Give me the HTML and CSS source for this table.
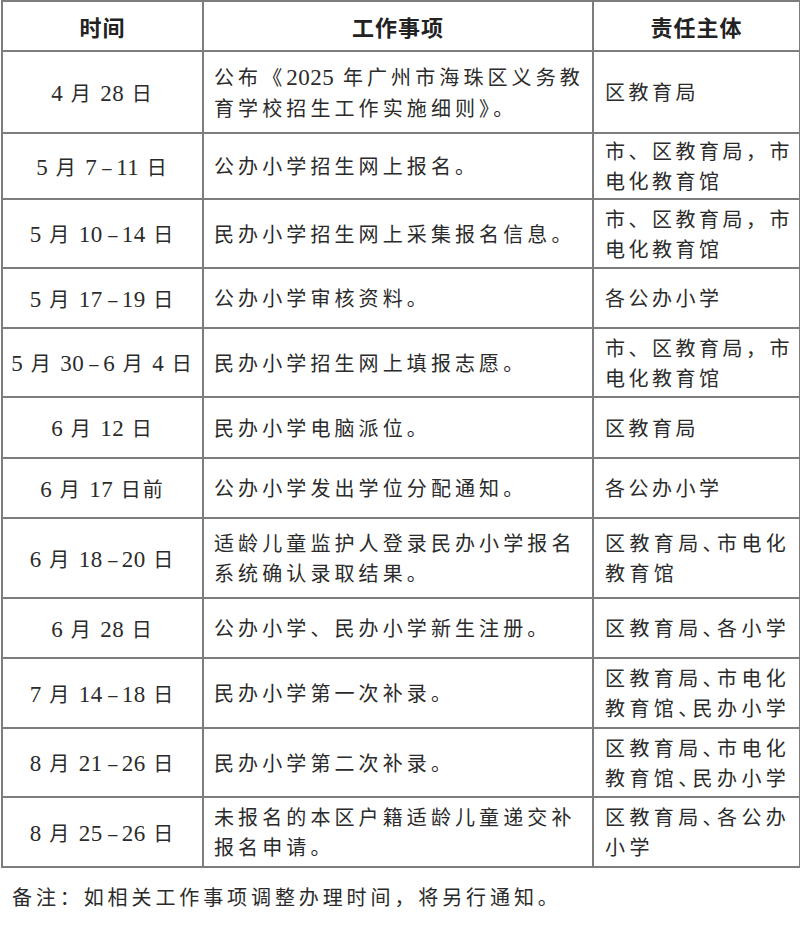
FILE: index.html
```html
<!DOCTYPE html>
<html lang="zh-CN">
<head>
<meta charset="utf-8">
<title>招生工作安排</title>
<link rel="stylesheet" href="styles.css">
</head>
<body>
<table class="sched">
  <colgroup>
    <col class="c1"><col class="c2"><col class="c3">
  </colgroup>
  <thead>
    <tr class="h50">
      <th>时间</th><th>工作事项</th><th>责任主体</th>
    </tr>
  </thead>
  <tbody>
    <tr class="h82">
      <td class="date"><span class="n">4</span> 月 <span class="n">28</span> 日</td>
      <td class="task">公布《<span class="n">2025</span> 年广州市海珠区义务教<br>育学校招生工作实施细则》。</td>
      <td class="who">区教育局</td>
    </tr>
    <tr class="h66">
      <td class="date"><span class="n">5</span> 月 <span class="n">7<span class="d">–</span>11</span> 日</td>
      <td class="task">公办小学招生网上报名。</td>
      <td class="who">市、区教育局，市<br>电化教育馆</td>
    </tr>
    <tr class="h69">
      <td class="date"><span class="n">5</span> 月 <span class="n">10<span class="d">–</span>14</span> 日</td>
      <td class="task">民办小学招生网上采集报名信息。</td>
      <td class="who">市、区教育局，市<br>电化教育馆</td>
    </tr>
    <tr class="h60">
      <td class="date"><span class="n">5</span> 月 <span class="n">17<span class="d">–</span>19</span> 日</td>
      <td class="task">公办小学审核资料。</td>
      <td class="who">各公办小学</td>
    </tr>
    <tr class="h69">
      <td class="date"><span class="n">5</span> 月 <span class="n">30<span class="d">–</span>6</span> 月 <span class="n">4</span> 日</td>
      <td class="task">民办小学招生网上填报志愿。</td>
      <td class="who">市、区教育局，市<br>电化教育馆</td>
    </tr>
    <tr class="h61">
      <td class="date"><span class="n">6</span> 月 <span class="n">12</span> 日</td>
      <td class="task">民办小学电脑派位。</td>
      <td class="who">区教育局</td>
    </tr>
    <tr class="h60">
      <td class="date"><span class="n">6</span> 月 <span class="n">17</span> 日前</td>
      <td class="task">公办小学发出学位分配通知。</td>
      <td class="who">各公办小学</td>
    </tr>
    <tr class="h80">
      <td class="date"><span class="n">6</span> 月 <span class="n">18<span class="d">–</span>20</span> 日</td>
      <td class="task">适龄儿童监护人登录民办小学报名<br>系统确认录取结果。</td>
      <td class="who tight">区教育局<span class="half">、</span>市电化<br>教育馆</td>
    </tr>
    <tr class="h60">
      <td class="date"><span class="n">6</span> 月 <span class="n">28</span> 日</td>
      <td class="task">公办小学、民办小学新生注册。</td>
      <td class="who tight">区教育局<span class="half">、</span>各小学</td>
    </tr>
    <tr class="h70">
      <td class="date"><span class="n">7</span> 月 <span class="n">14<span class="d">–</span>18</span> 日</td>
      <td class="task">民办小学第一次补录。</td>
      <td class="who tight">区教育局<span class="half">、</span>市电化<br>教育馆<span class="half">、</span>民办小学</td>
    </tr>
    <tr class="h69">
      <td class="date"><span class="n">8</span> 月 <span class="n">21<span class="d">–</span>26</span> 日</td>
      <td class="task">民办小学第二次补录。</td>
      <td class="who tight">区教育局<span class="half">、</span>市电化<br>教育馆<span class="half">、</span>民办小学</td>
    </tr>
    <tr class="h70">
      <td class="date"><span class="n">8</span> 月 <span class="n">25<span class="d">–</span>26</span> 日</td>
      <td class="task">未报名的本区户籍适龄儿童递交补<br>报名申请。</td>
      <td class="who tight">区教育局<span class="half">、</span>各公办<br>小学</td>
    </tr>
  </tbody>
</table>
<p class="note">备注：如相关工作事项调整办理时间，将另行通知。</p>
</body>
</html>
```

FILE: styles.css
```css
html, body {
  margin: 0;
  padding: 0;
  background: #ffffff;
}

body {
  font-family: "Noto Sans CJK SC", "Noto Sans", sans-serif;
  color: #2b2b2b;
  width: 800px;
}

.sched {
  border-collapse: collapse;
  table-layout: fixed;
  width: 798px;
  margin: 0 0 0 1px;
  font-size: 20px;
}

.c1 { width: 201px; }
.c2 { width: 390px; }
.c3 { width: 207px; }

.sched th,
.sched td {
  border: 2px solid #7d7d7d;
  padding: 0;
  vertical-align: middle;
  white-space: nowrap;
  overflow: hidden;
}

.sched th {
  font-weight: 700;
  font-size: 22px;
  text-align: center;
  letter-spacing: 1px;
  color: #222;
}

.date {
  text-align: center;
  letter-spacing: 2px;
  word-spacing: 1px;
}

.task {
  text-align: left;
  padding-left: 10px !important;
  letter-spacing: 4.1px;
  line-height: 30px;
}

.who {
  text-align: left;
  padding-left: 11px !important;
  letter-spacing: 3.5px;
  line-height: 30px;
}

.who.tight {
  letter-spacing: 4.4px;
}

.half {
  font-feature-settings: "halt" 1;
}

.n {
  font-family: "Liberation Serif", serif;
  font-size: 23px;
  letter-spacing: 0.5px;
}

.d {
  display: inline-block;
  margin: 0 3px 0 4px;
  transform: scaleX(0.8);
}

.h50 { height: 50px; }
.h60 { height: 60px; }
.h61 { height: 61px; }
.h66 { height: 66px; }
.h69 { height: 69px; }
.h70 { height: 70px; }
.h80 { height: 80px; }
.h82 { height: 82px; }

.note {
  margin: 14px 0 0 12px;
  font-size: 20px;
  letter-spacing: 3.9px;
  color: #2b2b2b;
}
```
